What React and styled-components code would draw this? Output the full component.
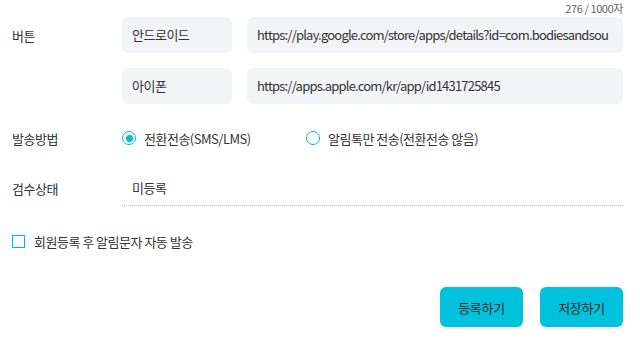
import React from 'react'
import styled, { createGlobalStyle } from 'styled-components'

const Global = createGlobalStyle`
    body {
        margin: 0;
        background: #fff;
        font-family: "Noto Sans CJK KR", "Noto Sans", sans-serif;
        color: #333;
    }
`

const Page = styled.div`
    width: 640px;
    padding: 0 17px 0 12px;
    box-sizing: border-box;
`

const Counter = styled.div`
    height: 17px;
    line-height: 16px;
    font-size: 11px;
    color: #666;
    text-align: right;
    letter-spacing: -0.4px;
`

const Row = styled.div`
    display: grid;
    grid-template-columns: 110px minmax(0, 1fr);
    align-items: center;
    margin-top: ${props => props.gap || 0}px;
`

const Label = styled.div`
    font-size: 13px;
    color: #333;
    letter-spacing: -0.5px;
`

const Fields = styled.div`
    display: flex;
    gap: 15px;
    min-width: 0;
`

const Box = styled.div`
    height: 36px;
    line-height: 36px;
    padding: 0 10px;
    background: #f3f4f6;
    border-radius: 6px;
    font-size: 13px;
    color: #333;
    white-space: nowrap;
    overflow: hidden;
    box-sizing: border-box;
    width: ${props => props.width ? props.width + 'px' : 'auto'};
    flex: ${props => props.width ? 'none' : 1};
    min-width: 0;
    letter-spacing: ${props => props.url ? '-0.8px' : '-0.5px'};
`

const Options = styled.div`
    display: flex;
    height: 36px;
    align-items: center;
`

const Radio = styled.label`
    display: flex;
    align-items: center;
    gap: 8px;
    font-size: 13px;
    width: ${props => props.width}px;
    letter-spacing: -0.5px;
`

const Circle = styled.span`
    width: 14px;
    height: 14px;
    border-radius: 50%;
    border: 1.5px solid #00bcd9;
    box-sizing: border-box;
    display: flex;
    align-items: center;
    justify-content: center;
    &::after {
        content: '';
        width: 7px;
        height: 7px;
        border-radius: 50%;
        background: ${props => props.checked ? '#00bcd9' : 'transparent'};
    }
`

const Status = styled.div`
    height: 36px;
    line-height: 36px;
    padding-left: 10px;
    font-size: 13px;
    border-bottom: 1px dotted #bbb;
    box-sizing: border-box;
    letter-spacing: -0.5px;
`

const CheckRow = styled.label`
    display: flex;
    align-items: center;
    gap: 9px;
    height: 20px;
    margin-top: 25px;
    font-size: 13px;
    letter-spacing: -0.5px;
`

const Check = styled.span`
    width: 13px;
    height: 13px;
    border: 1.5px solid #00bcd9;
    box-sizing: border-box;
`

const Actions = styled.div`
    display: flex;
    justify-content: flex-end;
    gap: 17px;
    margin-top: 36px;
`

const Button = styled.button`
    width: 83px;
    height: 40px;
    border: none;
    border-radius: 6px;
    background: #00c2dc;
    color: #2a2a2a;
    font-family: inherit;
    font-size: 13px;
    letter-spacing: -0.3px;
`

const App = () => {
    return (
        <Page>
            <Global />
            <Counter>276 / 1000자</Counter>
            <Row>
                <Label>버튼</Label>
                <Fields>
                    <Box width={110}>안드로이드</Box>
                    <Box url>https://play.google.com/store/apps/details?id=com.bodiesandsou</Box>
                </Fields>
            </Row>
            <Row gap={15}>
                <div />
                <Fields>
                    <Box width={110}>아이폰</Box>
                    <Box url>https://apps.apple.com/kr/app/id1431725845</Box>
                </Fields>
            </Row>
            <Row gap={16}>
                <Label>발송방법</Label>
                <Options>
                    <Radio width={184}><Circle checked />전환전송(SMS/LMS)</Radio>
                    <Radio><Circle />알림톡만 전송(전환전송 않음)</Radio>
                </Options>
            </Row>
            <Row gap={14}>
                <Label>검수상태</Label>
                <Status>미등록</Status>
            </Row>
            <CheckRow><Check />회원등록 후 알림문자 자동 발송</CheckRow>
            <Actions>
                <Button>등록하기</Button>
                <Button>저장하기</Button>
            </Actions>
        </Page>
    )
}

export default App
